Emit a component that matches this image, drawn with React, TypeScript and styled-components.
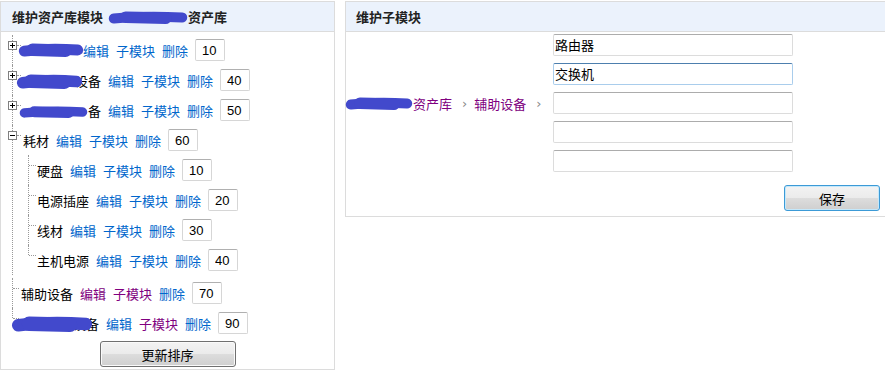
import React from "react";
import styled, { createGlobalStyle } from "styled-components";

const GlobalStyle = createGlobalStyle`
  html, body { margin: 0; padding: 0; background: #fff; }
  body {
    font-family: "Noto Sans CJK SC", "Noto Sans", sans-serif;
    font-size: 13px;
    color: #000;
  }
`;

const BLUE = "#0066cc";
const PURPLE = "#800080";
const INK = "#4249cc";

const Page = styled.div`
  display: flex;
  align-items: flex-start;
  width: 885px;
  height: 372px;
  overflow: hidden;
  padding-top: 1px;
  box-sizing: border-box;
`;

const Panel = styled.section<{ $width: number; $gap?: number }>`
  flex: 0 0 auto;
  width: ${(p) => p.$width}px;
  margin-left: ${(p) => p.$gap ?? 0}px;
  box-sizing: border-box;
  border: 1px solid #dcdcdc;
  background: #fff;
`;

const PanelHeader = styled.header<{ $pad: number }>`
  height: 29px;
  display: flex;
  align-items: center;
  padding-left: ${(p) => p.$pad}px;
  background: #ebf2fc;
  border-bottom: 1px solid #dcdcdc;
  font-weight: bold;
  font-size: 13px;
  color: #222;
  white-space: nowrap;
`;

const BlobWrap = styled.span<{ $w: number; $h: number; $ml: number; $mr: number; $mt: number }>`
  display: inline-block;
  flex: 0 0 auto;
  position: relative;
  z-index: 1;
  width: ${(p) => p.$w}px;
  height: ${(p) => p.$h}px;
  margin: ${(p) => p.$mt}px ${(p) => p.$mr}px 0 ${(p) => p.$ml}px;
  line-height: 0;
  svg { display: block; }
`;

function Redaction({ w, h, ml = 0, mr = 0, mt = 0 }: { w: number; h: number; ml?: number; mr?: number; mt?: number }) {
  return (
    <BlobWrap $w={w} $h={h} $ml={ml} $mr={mr} $mt={mt}>
      <svg width={w} height={h} viewBox={`0 0 ${w} ${h}`}>
        <path
          d={`M${h * 0.45} ${h * 0.58} Q ${w * 0.45} ${h * 0.35} ${w - h * 0.45} ${h * 0.5}`}
          stroke={INK}
          strokeWidth={h * 0.78}
          strokeLinecap="round"
          fill="none"
        />
        <path
          d={`M${w * 0.22} ${h * 0.48} L ${w * 0.72} ${h * 0.55}`}
          stroke={INK}
          strokeWidth={h * 0.9}
          strokeLinecap="round"
          fill="none"
        />
      </svg>
    </BlobWrap>
  );
}

const Tree = styled.ul`
  list-style: none;
  margin: 0;
  padding: 3px 0 0;
`;

const Node = styled.li<{ $leaf?: boolean; $last?: boolean }>`
  position: relative;
  padding-left: ${(p) => (p.$leaf ? 20 : 22)}px;
  &::before {
    content: "";
    position: absolute;
    left: 11px;
    top: 0;
    ${(p) => (p.$last ? "height: 10px;" : "bottom: 0;")}
    border-left: 1px dotted #999;
  }
  &::after {
    content: "";
    position: absolute;
    top: 10px;
    left: ${(p) => (p.$leaf ? 12 : 16)}px;
    width: ${(p) => (p.$leaf ? 6 : 4)}px;
    border-top: 1px dotted #999;
  }
`;

const ExpanderBox = styled.span`
  position: absolute;
  left: 7px;
  top: 6px;
  z-index: 1;
  width: 9px;
  height: 9px;
  line-height: 0;
  svg { display: block; }
`;

function Expander({ open }: { open?: boolean }) {
  return (
    <ExpanderBox>
      <svg width="9" height="9" viewBox="0 0 9 9">
        <rect x="0.5" y="0.5" width="8" height="8" fill="#fff" stroke="#808080" />
        <path d="M2 4.5H7" stroke="#000" />
        {!open && <path d="M4.5 2V7" stroke="#000" />}
      </svg>
    </ExpanderBox>
  );
}

const ChildList = styled.ul`
  list-style: none;
  margin: 0 0 3px;
  padding: 0;
`;

const ChildNode = styled.li<{ $last?: boolean }>`
  position: relative;
  padding-left: 14px;
  &::before {
    content: "";
    position: absolute;
    left: 5px;
    top: 0;
    ${(p) => (p.$last ? "height: 10px;" : "bottom: 0;")}
    border-left: 1px dotted #999;
  }
  &::after {
    content: "";
    position: absolute;
    top: 10px;
    left: 6px;
    width: 7px;
    border-top: 1px dotted #999;
  }
`;

const Row = styled.div`
  display: flex;
  align-items: center;
  gap: 7px;
  height: 30px;
  white-space: nowrap;
`;

const Label = styled.span<{ $mr?: number }>`
  display: inline-flex;
  align-items: center;
  margin-right: ${(p) => p.$mr ?? 0}px;
`;

const Link = styled.a<{ $visited?: boolean }>`
  color: ${(p) => (p.$visited ? PURPLE : BLUE)};
  text-decoration: none;
  cursor: pointer;
`;

const OrderInput = styled.input`
  width: 30px;
  height: 22px;
  box-sizing: border-box;
  margin: 0;
  padding: 0 0 0 6px;
  border: 1px solid #d6d6d6;
  border-top-color: #b0b0b0;
  border-radius: 2px;
  font: 13px "Liberation Sans", Arial, sans-serif;
  color: #000;
  background: #fff;
  outline: none;
`;

const Button = styled.button<{ $w: number; $focus?: boolean }>`
  width: ${(p) => p.$w}px;
  height: 26px;
  box-sizing: border-box;
  margin: 0;
  padding: 0;
  border: 1px solid ${(p) => (p.$focus ? "#3c9ad6" : "#707070")};
  border-radius: 3px;
  background: linear-gradient(#f3f3f3 0%, #ebebeb 50%, #dddddd 50%, #cfcfcf 100%);
  box-shadow: inset 0 0 0 1px ${(p) => (p.$focus ? "#c4e8fb" : "#fafafa")};
  font: 13px "Noto Sans CJK SC", sans-serif;
  color: #000;
  cursor: pointer;
`;

const UpdateBar = styled.div`
  display: flex;
  justify-content: center;
  padding: 3px 0 2px;
`;

const RightBody = styled.div`
  display: flex;
  flex-direction: column;
  padding: 2px 0 5px;
`;

const FormRow = styled.div`
  display: flex;
  align-items: center;
`;

const Breadcrumb = styled.div`
  flex: 0 0 207px;
  display: flex;
  align-items: center;
  white-space: nowrap;
`;

const Crumb = styled.a`
  color: ${PURPLE};
  text-decoration: none;
`;

const Sep = styled.span`
  color: #888;
  font: 13px "DejaVu Sans", sans-serif;
  margin: 0 7px 0 10px;
`;

const Fields = styled.div`
  display: flex;
  flex-direction: column;
  gap: 7px;
`;

const NameInput = styled.input<{ $focus?: boolean }>`
  width: 240px;
  height: 22px;
  box-sizing: border-box;
  margin: 0;
  padding: 0 0 2px 1px;
  border: 1px solid ${(p) => (p.$focus ? "#a9cdec" : "#dcdcdc")};
  border-top-color: ${(p) => (p.$focus ? "#4d7fae" : "#acacac")};
  border-radius: 2px;
  font: 13px "Noto Sans CJK SC", sans-serif;
  color: #000;
  background: #fff;
  outline: none;
`;

const Actions = styled.div`
  display: flex;
  justify-content: flex-end;
  margin-top: 13px;
  padding-right: 5px;
`;

type Acts = { edit?: boolean; sub?: boolean };

function Actions3({ v = {}, order }: { v?: Acts; order: string }) {
  return (
    <>
      <Link $visited={v.edit}>编辑</Link>
      <Link $visited={v.sub}>子模块</Link>
      <Link>删除</Link>
      <OrderInput defaultValue={order} readOnly />
    </>
  );
}

export default function App() {
  return (
    <>
      <GlobalStyle />
      <Page>
        <Panel $width={335}>
          <PanelHeader $pad={11}>
            维护资产库模块
            <Redaction w={80} h={13} ml={5} mt={1} />
            资产库
          </PanelHeader>
          <Tree>
            <Node>
              <Expander />
              <Row>
                <Label $mr={-8}>
                  <Redaction w={66} h={14} ml={-5} />
                </Label>
                <Actions3 order="10" />
              </Row>
            </Node>
            <Node>
              <Expander />
              <Row>
                <Label>
                  <Redaction w={67} h={15} ml={-7} mr={-8} mt={3} />
                  <span>设备</span>
                </Label>
                <Actions3 order="40" />
              </Row>
            </Node>
            <Node>
              <Expander />
              <Row>
                <Label>
                  <Redaction w={69} h={12} ml={-4} mt={3} />
                  <span>备</span>
                </Label>
                <Actions3 order="50" />
              </Row>
            </Node>
            <Node>
              <Expander open />
              <Row>
                <span>耗材</span>
                <Actions3 order="60" />
              </Row>
              <ChildList>
                <ChildNode>
                  <Row>
                    <span>硬盘</span>
                    <Actions3 order="10" />
                  </Row>
                </ChildNode>
                <ChildNode>
                  <Row>
                    <span>电源插座</span>
                    <Actions3 order="20" />
                  </Row>
                </ChildNode>
                <ChildNode>
                  <Row>
                    <span>线材</span>
                    <Actions3 order="30" />
                  </Row>
                </ChildNode>
                <ChildNode $last>
                  <Row>
                    <span>主机电源</span>
                    <Actions3 order="40" />
                  </Row>
                </ChildNode>
              </ChildList>
            </Node>
            <Node $leaf>
              <Row>
                <span>辅助设备</span>
                <Actions3 v={{ edit: true, sub: true }} order="70" />
              </Row>
            </Node>
            <Node $leaf $last>
              <Row>
                <Label>
                  <Redaction w={82} h={16} ml={-10} mr={-20} mt={2} />
                  <span>设备</span>
                </Label>
                <Actions3 v={{ sub: true }} order="90" />
              </Row>
            </Node>
          </Tree>
          <UpdateBar>
            <Button $w={136}>更新排序</Button>
          </UpdateBar>
        </Panel>

        <Panel $width={541} $gap={10}>
          <PanelHeader $pad={10}>维护子模块</PanelHeader>
          <RightBody>
            <FormRow>
              <Breadcrumb>
                <Redaction w={68} h={13} ml={-1} />
                <Crumb>资产库</Crumb>
                <Sep>›</Sep>
                <Crumb>辅助设备</Crumb>
                <Sep>›</Sep>
              </Breadcrumb>
              <Fields>
                <NameInput defaultValue="路由器" readOnly />
                <NameInput $focus defaultValue="交换机" readOnly />
                <NameInput readOnly />
                <NameInput readOnly />
                <NameInput readOnly />
              </Fields>
            </FormRow>
            <Actions>
              <Button $w={96} $focus>保存</Button>
            </Actions>
          </RightBody>
        </Panel>
      </Page>
    </>
  );
}
